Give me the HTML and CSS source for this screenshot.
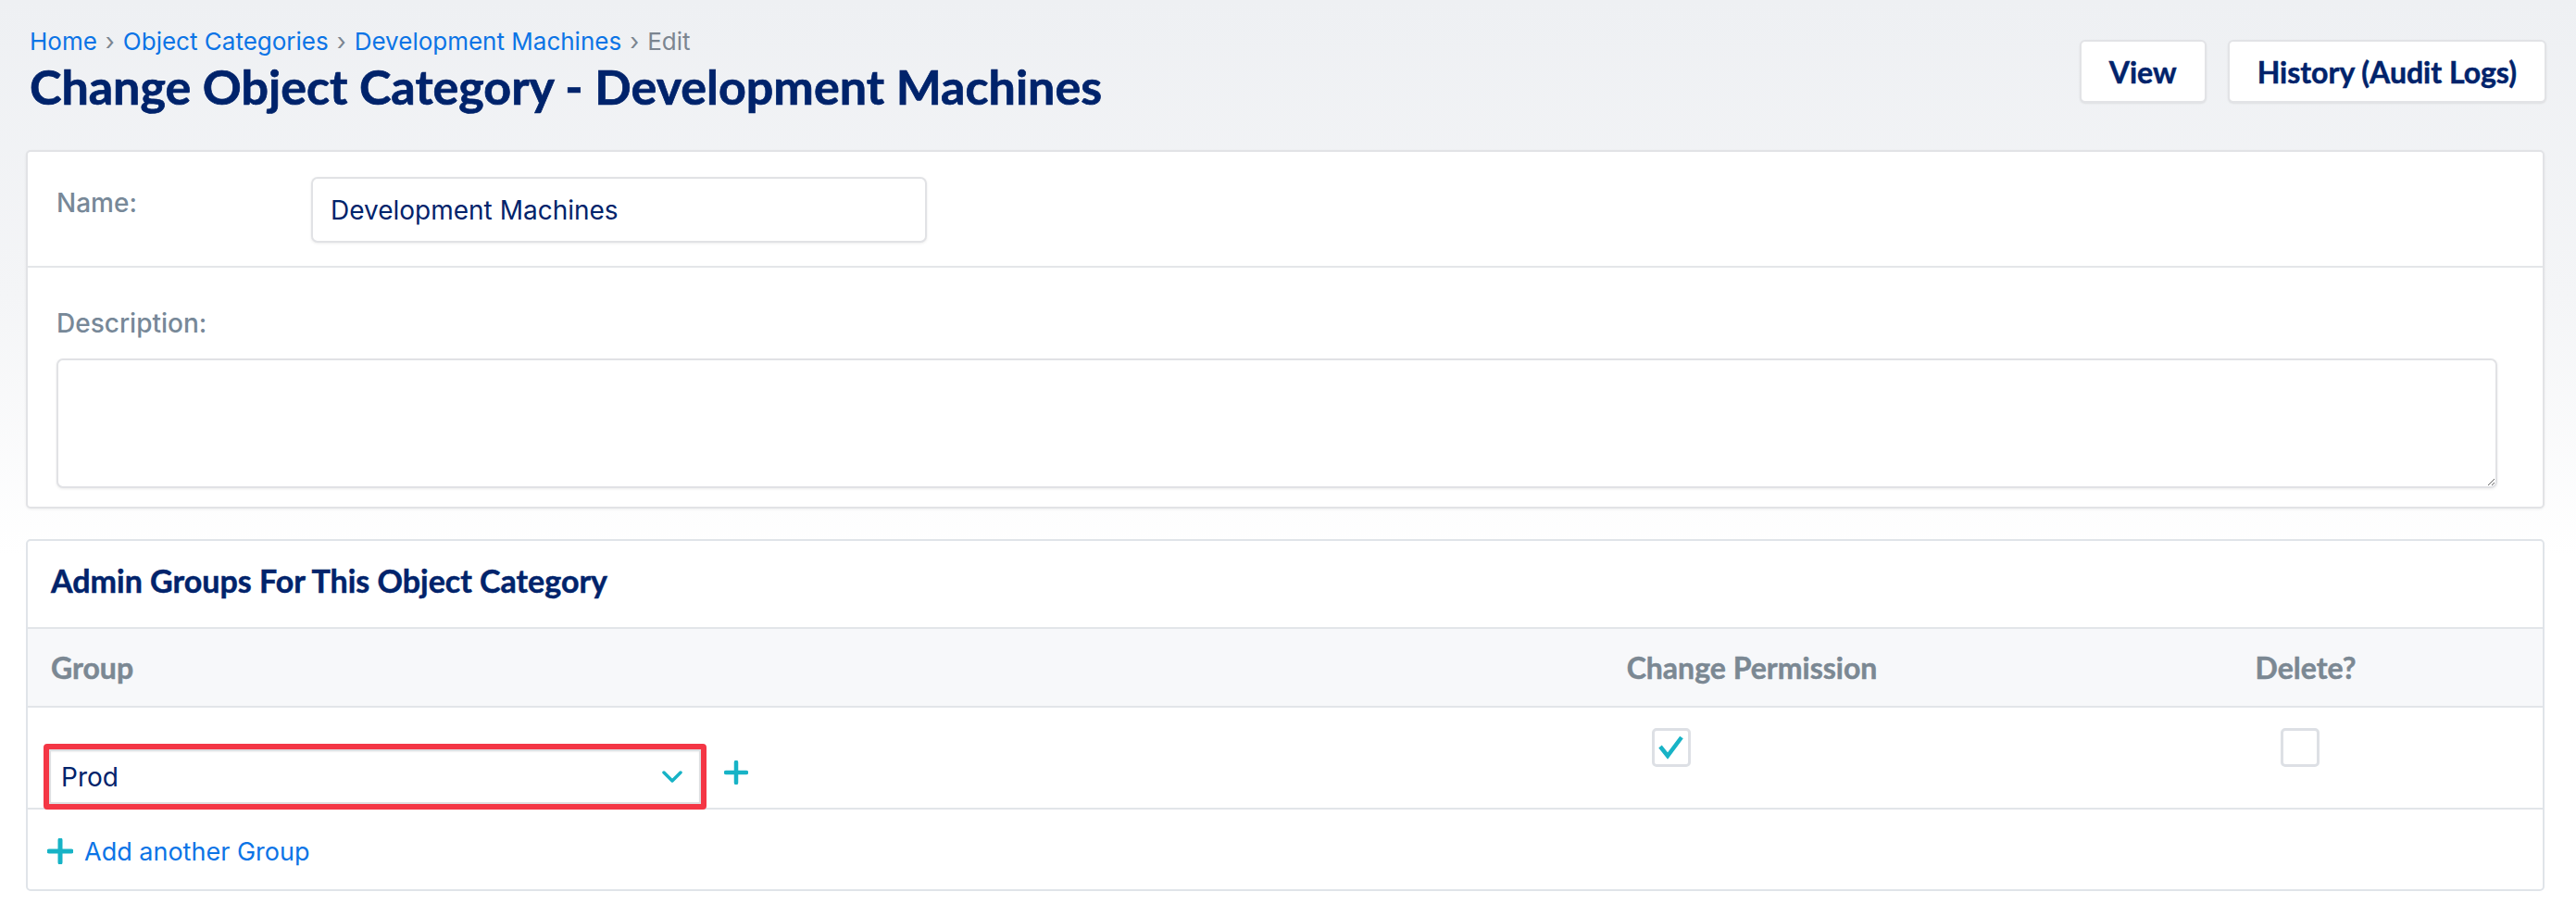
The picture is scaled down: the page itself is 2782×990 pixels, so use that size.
FILE: index.html
```html
<!DOCTYPE html>
<html lang="en">
<head>
<meta charset="utf-8">
<title>Change Object Category - Development Machines</title>
<link rel="stylesheet" href="styles.css">
</head>
<body>
<div class="page">
  <header class="page-header">
    <div class="heading">
      <nav class="crumbs">
        <a class="crumb-link">Home</a><span class="sep">›</span><a class="crumb-link">Object Categories</a><span class="sep">›</span><a class="crumb-link">Development Machines</a><span class="sep">›</span><span class="crumb-current">Edit</span>
      </nav>
      <h1 class="title">Change Object Category - Development Machines</h1>
    </div>
    <div class="actions">
      <button class="btn">View</button>
      <button class="btn">History (Audit Logs)</button>
    </div>
  </header>

  <section class="card form-card">
    <div class="name-row">
      <label class="field-label name-label">Name:</label>
      <input class="text-input" type="text" value="Development Machines">
    </div>
    <div class="desc-row">
      <label class="field-label">Description:</label>
      <textarea class="textarea"></textarea>
    </div>
  </section>

  <section class="card inline-card">
    <h2 class="inline-title">Admin Groups For This Object Category</h2>
    <div class="grid head-row">
      <div class="head-cell">Group</div>
      <div class="head-cell center">Change Permission</div>
      <div class="head-cell center">Delete?</div>
    </div>
    <div class="grid data-row">
      <div class="group-cell">
        <div class="select-outline">
          <div class="select-box">
            <span class="select-value">Prod</span>
            <svg class="chevron" width="22" height="14" viewBox="0 0 22 14"><path d="M2 2 L11 11 L20 2" fill="none" stroke="#17b3c6" stroke-width="3.5" stroke-linecap="round" stroke-linejoin="round"/></svg>
          </div>
        </div>
        <svg class="plus-icon" width="26" height="26" viewBox="0 0 26 26"><path d="M13 2 V24 M2 13 H24" stroke="#17b3c6" stroke-width="4.5" stroke-linecap="round"/></svg>
      </div>
      <div class="check-cell perm-cell">
        <div class="checkbox">
          <svg width="36" height="36" viewBox="0 0 36 36"><path d="M6 17 L14 27 L29 7" fill="none" stroke="#17b3c6" stroke-width="4.5" stroke-linejoin="miter"/></svg>
        </div>
      </div>
      <div class="check-cell delete-cell">
        <div class="checkbox"></div>
      </div>
    </div>
    <div class="add-row">
      <svg class="add-plus" width="28" height="28" viewBox="0 0 28 28"><path d="M14 2 V26 M2 14 H26" stroke="#17b3c6" stroke-width="5" stroke-linecap="round"/></svg>
      <span class="add-link">Add another Group</span>
    </div>
  </section>
</div>
</body>
</html>
```

FILE: styles.css
```css
* { box-sizing: border-box; }

html, body { margin: 0; }

body {
  min-height: 990px;
  background: linear-gradient(to bottom, #eef0f3 0, #f4f5f7 320px, #ffffff 600px) no-repeat;
  background-color: #fff;
  font-family: Inter, "Noto Sans", sans-serif;
  color: #00236b;
}

.page {
  padding: 30px 34px 0 28px;
}

/* header */
.page-header {
  display: flex;
  justify-content: space-between;
  align-items: flex-start;
  height: 132px;
  padding-left: 4px;
}

.crumbs {
  font-size: 26px;
  line-height: 30px;
  color: #7b8590;
}

.crumb-link { color: #0b74e6; text-decoration: none; }
.crumb-current { color: #7b8590; }
.sep { margin: 0 9px; color: #7b8590; }

.title {
  margin: 5px 0 0;
  font-family: Lato, "Noto Sans", sans-serif;
  font-weight: 700;
  font-size: 52px;
  line-height: 56px;
  color: #00236b;
  -webkit-text-stroke: 0.7px #00236b;
}

.actions {
  display: flex;
  gap: 23px;
  margin-top: 13px;
  margin-right: -2px;
}

.btn {
  height: 68px;
  padding: 0 30px;
  background: #fff;
  border: 2px solid #e2e3e6;
  border-radius: 6px;
  box-shadow: 0 1px 2px rgba(0,0,0,0.08);
  font-family: Lato, "Noto Sans", sans-serif;
  font-weight: 700;
  font-size: 32px;
  color: #00236b;
  -webkit-text-stroke: 0.5px #00236b;
}

/* cards */
.card {
  background: #fff;
  border-radius: 5px;
}

.form-card {
  border: 2px solid #e2e3e6;
  box-shadow: 0 1px 3px rgba(0,0,0,0.06);
}

.name-row {
  display: flex;
  align-items: flex-start;
  padding: 27px 31px 25px;
  border-bottom: 2px solid #e4e6e9;
}

.field-label {
  font-weight: 500;
  font-size: 28px;
  line-height: 32px;
  color: #778898;
}

.name-label {
  width: 275px;
  margin-top: 12px;
}

.text-input {
  width: 665px;
  height: 71px;
  padding: 0 19px;
  border: 2px solid #e1e2e5;
  border-radius: 7px;
  box-shadow: 0 1px 3px rgba(0,0,0,0.08);
  font-family: Inter, "Noto Sans", sans-serif;
  font-size: 28px;
  color: #00236b;
  outline: none;
}

.desc-row {
  display: flex;
  flex-direction: column;
  gap: 22px;
  padding: 44px 49px 20px 31px;
}

.textarea {
  display: block;
  width: 100%;
  height: 140px;
  border: 2px solid #e1e2e5;
  border-radius: 7px;
  box-shadow: 0 1px 3px rgba(0,0,0,0.08);
  resize: both;
}

/* inline table */
.inline-card {
  margin-top: 33px;
  border: 2px solid #e0e4e9;
}

.inline-title {
  margin: 0;
  padding: 23px 25px 30px;
  font-family: Lato, "Noto Sans", sans-serif;
  font-weight: 700;
  font-size: 34px;
  line-height: 40px;
  color: #00236b;
  -webkit-text-stroke: 0.5px #00236b;
}

.grid {
  display: grid;
  grid-template-columns: 1fr 684px 512px;
}

.head-row {
  height: 87px;
  align-items: center;
  background: #f7f8fa;
  border-top: 2px solid #e2e5e9;
  border-bottom: 2px solid #e2e5e9;
}

.head-cell {
  padding-left: 25px;
  font-family: Lato, "Noto Sans", sans-serif;
  font-weight: 700;
  font-size: 32px;
  line-height: 36px;
  color: #7b8893;
  -webkit-text-stroke: 0.5px #7b8893;
}

.head-cell.center { padding-left: 0; text-align: center; }

.data-row {
  height: 110px;
  align-items: start;
  padding-top: 22px;
  border-bottom: 2px solid #e2e5e9;
}

.group-cell {
  display: flex;
  align-items: center;
  padding-left: 17px;
  margin-top: 17px;
}

.select-outline {
  position: relative;
  width: 716px;
  height: 71px;
  border: 6px solid #f43645;
  border-radius: 4px;
  background: #fff;
}

.select-box {
  display: flex;
  align-items: center;
  justify-content: space-between;
  height: 100%;
  padding: 0 18px 0 11px;
  border: 2px solid #dedfe2;
  box-shadow: inset 0 1px 2px rgba(0,0,0,0.06);
}

.select-value {
  font-size: 28px;
  color: #00236b;
}

.plus-icon {
  margin-left: 19px;
  margin-top: -10px;
}

.check-cell {
  display: flex;
  justify-content: flex-start;
}

.perm-cell { padding-left: 234px; }
.delete-cell { padding-left: 229px; }

.checkbox {
  width: 42px;
  height: 42px;
  border: 3px solid #dde0e5;
  border-radius: 5px;
  background: #fff;
  display: flex;
  align-items: center;
  justify-content: center;
}

.add-row {
  display: flex;
  align-items: center;
  height: 86px;
  padding-left: 21px;
  padding-top: 4px;
}

.add-link {
  margin-left: 12px;
  font-size: 27px;
  color: #0b74e6;
}
```
